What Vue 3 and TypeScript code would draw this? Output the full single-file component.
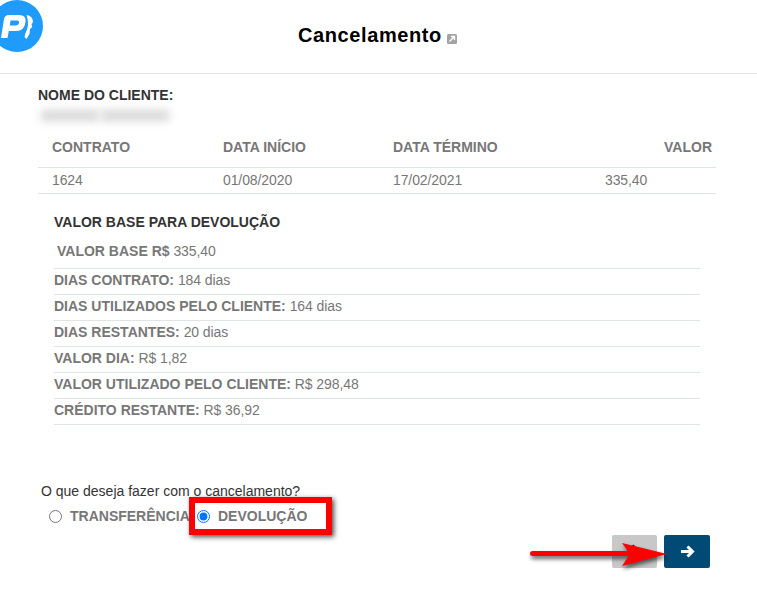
<template>
  <div class="page">
    <header class="topbar">
      <svg class="logo" width="44" height="53" viewBox="0 0 44 53">
        <circle cx="17" cy="26" r="26" fill="#1e9bfb" />
        <path d="M1 38 L4 19 Q4.800 15 9 15 L19 15 Q26.500 15 25.500 22 Q24.500 31 16 31 L8.800 31 L7.500 38 Z M10.500 20.500 L9.800 25.500 L15 25.500 Q18.500 25.500 19 23 Q19.500 20.500 17 20.500 Z" fill="#fff" fill-rule="evenodd" />
        <path d="M26.500 15 Q33 16 33 22 L31.500 24.500 L32.300 27 L30 29 L29.500 34 L26.500 39 L24.500 37 L25.500 33 Q30 25 26.500 15 Z" fill="#fff" />
      </svg>
      <h1 class="title">
        Cancelamento
        <svg class="ext" width="10" height="10" viewBox="0 0 10 10">
          <rect width="10" height="10" rx="1.500" fill="#a3a3a3" />
          <path d="M2.500 7.500 L7 3 M4 2.500 L7.500 2.500 L7.500 6" stroke="#fff" stroke-width="1.400" fill="none" />
        </svg>
      </h1>
    </header>

    <section class="client">
      <h2 class="client-label">NOME DO CLIENTE:</h2>
      <div class="client-blur" aria-hidden="true">
        <span class="blur-a"></span>
        <span class="blur-b"></span>
      </div>
    </section>

    <div class="contract">
      <div class="contract-row head">
        <span v-for="col in columns" :key="col">{{ col }}</span>
      </div>
      <div class="contract-row body">
        <span v-for="val in values" :key="val" class="val">{{ val }}</span>
      </div>
    </div>

    <section class="base">
      <h3 class="base-title">VALOR BASE PARA DEVOLUÇÃO</h3>
      <div class="base-first"><b>VALOR BASE R$</b> <span class="val">335,40</span></div>
      <div v-for="row in rows" :key="row.label" class="base-row">
        <b>{{ row.label }}</b> <span class="val">{{ row.value }}</span>
      </div>
    </section>

    <section class="choice">
      <p class="question">O que deseja fazer com o cancelamento?</p>
      <div class="options">
        <label class="opt first-opt"><input type="radio" name="acao" value="t" /> TRANSFERÊNCIA</label>
        <label class="opt"><input type="radio" name="acao" value="d" checked /> DEVOLUÇÃO</label>
        <span class="highlight"></span>
      </div>
    </section>

    <div class="actions">
      <button class="btn back" type="button">
        <svg width="15" height="13" viewBox="0 0 15 13">
          <path d="M14 6.500 H3 M7.500 1.500 L2.500 6.500 L7.500 11.500" stroke="#222" stroke-width="3" fill="none" />
        </svg>
      </button>
      <button class="btn next" type="button">
        <svg width="15" height="13" viewBox="0 0 15 13">
          <path d="M1 6.500 H12 M7.500 1.500 L12.500 6.500 L7.500 11.500" stroke="#fff" stroke-width="3" fill="none" />
        </svg>
      </button>
      <svg class="red-arrow" width="146" height="32" viewBox="0 0 146 32">
        <path d="M2.500 13.500 H100" stroke="#f00" stroke-width="5" stroke-linecap="round" />
        <path d="M92 3 L137 14 L92 26 L100 14 Z" fill="#f00" />
      </svg>
    </div>
  </div>
</template>

<script setup lang="ts">
const columns = ['CONTRATO', 'DATA INÍCIO', 'DATA TÉRMINO', 'VALOR']
const values = ['1624', '01/08/2020', '17/02/2021', '335,40']

const rows = [
  { label: 'DIAS CONTRATO:', value: '184 dias' },
  { label: 'DIAS UTILIZADOS PELO CLIENTE:', value: '164 dias' },
  { label: 'DIAS RESTANTES:', value: '20 dias' },
  { label: 'VALOR DIA:', value: 'R$ 1,82' },
  { label: 'VALOR UTILIZADO PELO CLIENTE:', value: 'R$ 298,48' },
  { label: 'CRÉDITO RESTANTE:', value: 'R$ 36,92' },
]
</script>

<style>
html,
body {
  background: #fff;
}
</style>

<style scoped>
.page {
  width: 757px;
  height: 597px;
  overflow: hidden;
  font-family: "Liberation Sans", Arial, sans-serif;
  font-size: 14px;
  color: #777;
}

.val {
  letter-spacing: -0.1px;
}

.topbar {
  position: relative;
  height: 73px;
  border-bottom: 1px solid #e5e5e5;
}

.logo {
  position: absolute;
  left: 0;
  top: 0;
}

.title {
  margin: 0;
  padding: 24px 0 0 298px;
  font-size: 20px;
  line-height: 23px;
  font-weight: 700;
  letter-spacing: 0.6px;
  color: #000;
}

.ext {
  margin-left: -1px;
  vertical-align: -2px;
}

.client {
  padding: 13px 0 0 38px;
}

.client-label {
  margin: 0;
  font-size: 14px;
  line-height: 16px;
  font-weight: 700;
  color: #333;
}

.client-blur {
  display: flex;
  gap: 2px;
  height: 18px;
  margin-top: 2px;
  padding: 5px 0 0 3px;
  box-sizing: border-box;
}

.blur-a,
.blur-b {
  height: 11px;
  background: #d8d8d8;
  filter: blur(4px);
}

.blur-a {
  width: 58px;
}

.blur-b {
  width: 68px;
}

.contract {
  width: 678px;
  margin: 5px 0 0 38px;
}

.contract-row {
  display: grid;
  grid-template-columns: 171px 170px 212px 125px;
  align-items: center;
  border-bottom: 1px solid #dfe5e5;
}

.contract-row span {
  padding-left: 14px;
}

.contract-row.body {
  height: 23px;
  padding-bottom: 2px;
}

.contract-row.head {
  height: 38px;
  padding-bottom: 1px;
  font-weight: 700;
  color: #777;
}

.contract-row.head span:last-child {
  padding: 0 4px 0 0;
  text-align: right;
}

.base {
  width: 646px;
  margin: 0 0 0 54px;
}

.base-title {
  margin: 0;
  padding-top: 20px;
  font-size: 14px;
  line-height: 16px;
  font-weight: 700;
  color: #333;
}

.base-first {
  height: 25px;
  padding: 13px 0 0 3px;
  line-height: 16px;
  border-bottom: 1px solid #dfe5e5;
}

.base-row {
  height: 25px;
  line-height: 23px;
  border-bottom: 1px solid #dfe5e5;
}

.choice {
  padding: 0 0 0 41px;
}

.question {
  margin: 0;
  padding-top: 58px;
  line-height: 16px;
  color: #333;
}

.options {
  position: relative;
  display: flex;
  height: 22px;
  margin-top: 6px;
  padding-left: 8px;
  align-items: center;
}

.opt {
  display: flex;
  align-items: center;
  font-size: 14px;
  font-weight: 700;
  white-space: nowrap;
}

.opt input {
  width: 13px;
  height: 13px;
  margin: 0 8px 0 0;
}

.first-opt {
  width: 148px;
}

.highlight {
  position: absolute;
  left: 148px;
  top: -8px;
  width: 131px;
  height: 26px;
  border: 6px solid #f00;
  box-shadow: 2px 2px 5px rgba(0, 0, 0, 0.7);
}

.actions {
  position: relative;
  display: flex;
  justify-content: flex-end;
  gap: 7px;
  margin-top: 8px;
  padding-right: 47px;
}

.btn {
  display: flex;
  align-items: center;
  justify-content: center;
  height: 33px;
  padding: 0;
  border: none;
  border-radius: 2px;
}

.back {
  width: 45px;
  padding-bottom: 3px;
  background: #c8c8c8;
}

.next {
  width: 46px;
  background: #004a76;
}

.red-arrow {
  position: absolute;
  left: 530px;
  top: 5px;
  filter: drop-shadow(1px 3px 2px rgba(0, 0, 0, 0.6));
}
</style>
